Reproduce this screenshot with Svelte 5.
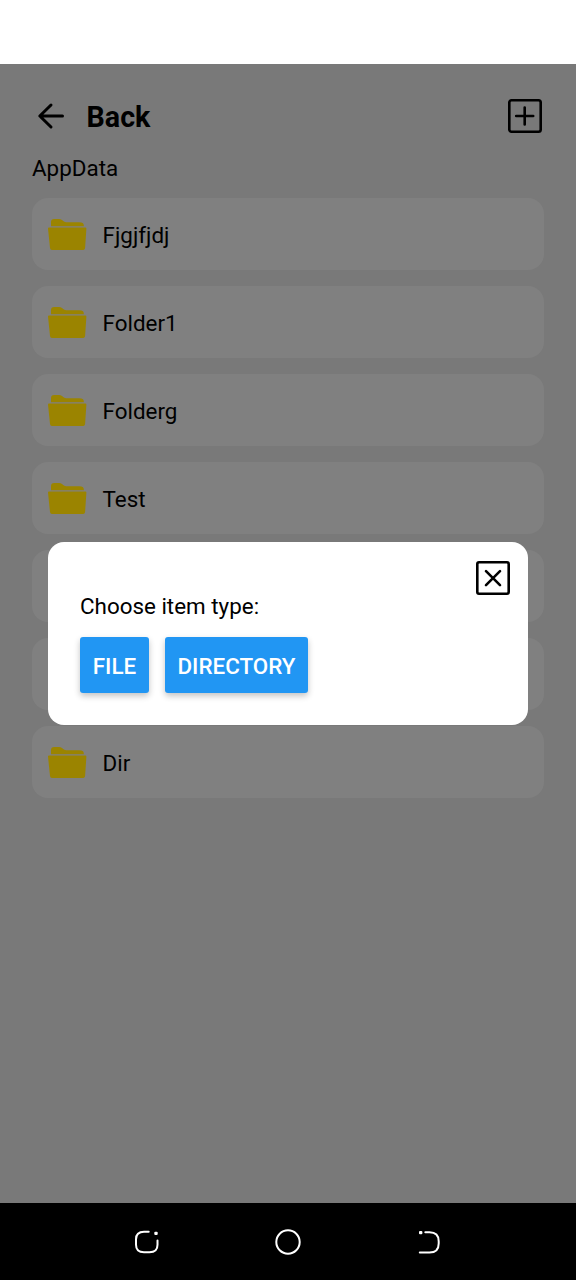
<script>
  const items = ['Fjgjfjdj', 'Folder1', 'Folderg', 'Test', '', '', 'Dir'];
</script>

<div class="screen">
  <div class="status"></div>
  <main>
    <header>
      <svg class="back" width="28" height="28" viewBox="0 0 28 28"><path d="M14 3 2.8 14 14 25M3 14h22.5" /></svg>
      <h1>Back</h1>
      <svg class="add" width="36" height="36" viewBox="0 0 36 36">
        <rect x="2.3" y="2.3" width="31.4" height="31.4" rx="2.2" />
        <path d="M17.7 9.5v17M9.2 18h17" />
      </svg>
    </header>
    <p class="path">AppData</p>
    <ul>
      {#each items as name}
        <li>
          <svg width="40" height="34" viewBox="0 0 40 34">
            <path d="M3 8.3V4Q3 1 6 1h5q1.8 0 3 1l1.6 1.3q1.2.9 2.8.9h12.9Q35.8 4.2 35.8 7.2v1.1z" />
            <path d="M1 9.4h36.2q1.3 0 1.2 1.2l-1.3 19.5q-.2 2-2 2H4q-1.8 0-2-2L0 10.6Q-.1 9.4 1 9.4z" />
          </svg>
          <span>{name}</span>
        </li>
      {/each}
    </ul>
  </main>
  <nav>
    <svg width="26" height="26" viewBox="0 0 26 26">
      <path d="M14.7 2.7H10Q2 2.7 2 10.2v5.6q0 7.5 8 7.5h5.5q8 0 8-7.5v-4.3" />
      <rect class="dot" x="20.3" y="2.7" width="3.4" height="3.4" rx="1" />
    </svg>
    <svg width="26" height="26" viewBox="0 0 26 26"><circle cx="13" cy="13" r="11.7" /></svg>
    <svg width="26" height="26" viewBox="0 0 26 26">
      <path d="M9.3 3.3H13.5Q22.7 3.3 22.7 12.3v2.2q0 9.1-9.2 9.1H3.8" />
      <rect class="dot" x="3" y="1.9" width="3.4" height="3.4" rx="1" />
    </svg>
  </nav>

  <div class="dialog">
    <svg class="close" width="36" height="36" viewBox="0 0 36 36">
      <rect x="2.3" y="2.3" width="31.4" height="31.4" rx="1.7" />
      <path d="m11 11.2 14 14M25 11.2l-14 14" />
    </svg>
    <p>Choose item type:</p>
    <div class="actions">
      <button class="file">FILE</button>
      <button class="directory">DIRECTORY</button>
    </div>
  </div>
</div>

<style>
  :global(body) { margin: 0; }
  .screen {
    position: relative;
    display: flex;
    flex-direction: column;
    width: 576px;
    height: 1280px;
    overflow: hidden;
    background: #797979;
    color: #000;
    font-family: Roboto, sans-serif;
    font-size: 22.4px;
  }
  .status { height: 64px; background: #fff; }
  main { flex: 1; padding: 0 32px; }
  header { display: flex; align-items: center; height: 104px; margin-bottom: -16px; }
  svg { display: block; flex: none; }
  .back, .add, .close { fill: none; stroke: #000; stroke-width: 2.6; stroke-linecap: round; stroke-linejoin: round; }
  .back { margin-left: 5px; stroke-width: 3; }
  h1 { flex: 1; margin: 2px 0 0 21.6px; font-size: 28.6px; line-height: 36px; font-weight: 700; }
  .add { margin-right: 1px; }
  .path { margin: 0; height: 30px; line-height: 32px; }
  ul { display: flex; flex-direction: column; gap: 16px; margin: 16px 0 0; padding: 0; list-style: none; }
  li { display: flex; align-items: center; height: 72px; padding-left: 16px; box-sizing: border-box; border-radius: 16px; background: #808080; }
  li svg { margin-top: 2px; fill: #9b8400; overflow: visible; }
  li span { margin: 1px 0 0 14.6px; }
  nav { display: flex; justify-content: center; align-items: center; gap: 115px; height: 77px; background: #000; }
  nav svg { fill: none; stroke: #fff; stroke-width: 2; stroke-linecap: round; }
  nav .dot { fill: #fff; stroke: none; }
  .dialog {
    position: absolute;
    left: 48px;
    top: 542px;
    width: 480px;
    height: 183px;
    box-sizing: border-box;
    padding: 18px 17px 0 32px;
    border-radius: 16px;
    background: #fff;
  }
  .close { margin-left: auto; }
  .dialog p { margin: -4px 0 16px; line-height: 29px; }
  .actions { display: flex; gap: 16px; }
  button {
    height: 56px;
    padding: 1px 0 0;
    border: 0;
    border-radius: 3px;
    background: #2196f3;
    color: #fff;
    font: 500 22.4px Roboto, sans-serif;
    box-shadow: 0 3px 6px rgba(0, 0, 0, .24);
  }
  .file { width: 69px; }
  .directory { width: 143px; }
</style>
